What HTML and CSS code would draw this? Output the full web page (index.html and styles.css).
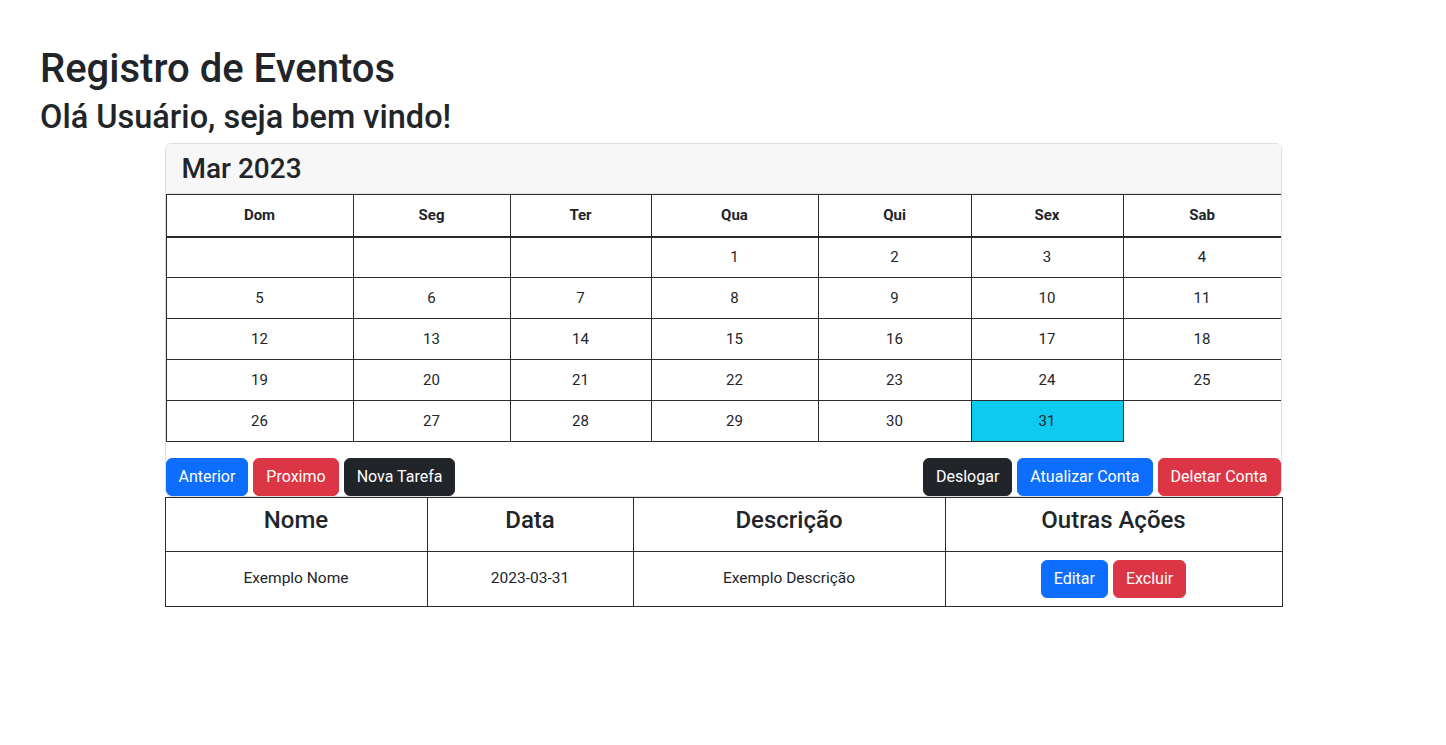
FILE: index.html
```html
<!DOCTYPE html>
<html lang="pt-BR">
<head>
<meta charset="utf-8">
<title>Registro de Eventos</title>
<link rel="stylesheet" href="styles.css">
</head>
<body>
<header class="intro">
  <h1 class="title">Registro de Eventos</h1>
  <h2 class="greeting">Olá Usuário, seja bem vindo!</h2>
</header>
<main class="board">
  <section class="card">
    <div class="card-header"><h3 class="month">Mar 2023</h3></div>
    <table class="calendar">
      <colgroup>
        <col class="c1"><col class="c2"><col class="c3"><col class="c4"><col class="c5"><col class="c6"><col class="c7">
      </colgroup>
      <thead>
        <tr><th>Dom</th><th>Seg</th><th>Ter</th><th>Qua</th><th>Qui</th><th>Sex</th><th>Sab</th></tr>
      </thead>
      <tbody>
        <tr><td></td><td></td><td></td><td>1</td><td>2</td><td>3</td><td>4</td></tr>
        <tr><td>5</td><td>6</td><td>7</td><td>8</td><td>9</td><td>10</td><td>11</td></tr>
        <tr><td>12</td><td>13</td><td>14</td><td>15</td><td>16</td><td>17</td><td>18</td></tr>
        <tr><td>19</td><td>20</td><td>21</td><td>22</td><td>23</td><td>24</td><td>25</td></tr>
        <tr><td>26</td><td>27</td><td>28</td><td>29</td><td>30</td><td class="today">31</td></tr>
      </tbody>
    </table>
    <div class="actions">
      <div class="group">
        <button class="btn btn-primary">Anterior</button>
        <button class="btn btn-danger">Proximo</button>
        <button class="btn btn-dark">Nova Tarefa</button>
      </div>
      <div class="group">
        <button class="btn btn-dark">Deslogar</button>
        <button class="btn btn-primary">Atualizar Conta</button>
        <button class="btn btn-danger">Deletar Conta</button>
      </div>
    </div>
  </section>
  <table class="events">
    <colgroup>
      <col class="e1"><col class="e2"><col class="e3"><col class="e4">
    </colgroup>
    <thead>
      <tr>
        <th><h4 class="col-title">Nome</h4></th>
        <th><h4 class="col-title">Data</h4></th>
        <th><h4 class="col-title">Descrição</h4></th>
        <th><h4 class="col-title">Outras Ações</h4></th>
      </tr>
    </thead>
    <tbody>
      <tr>
        <td>Exemplo Nome</td>
        <td>2023-03-31</td>
        <td>Exemplo Descrição</td>
        <td>
          <div class="row-actions">
            <button class="btn btn-primary">Editar</button>
            <button class="btn btn-danger">Excluir</button>
          </div>
        </td>
      </tr>
    </tbody>
  </table>
</main>
</body>
</html>
```
FILE: styles.css
```css
* { box-sizing: border-box; }

body {
  margin: 0;
  font-family: Roboto, "Liberation Sans", Arial, sans-serif;
  font-size: 16px;
  line-height: 1.5;
  color: #212529;
  background: #fff;
}

.intro {
  padding: 45px 40px 0;
}

.title {
  margin: 0 0 5px;
  font-size: 40px;
  font-weight: 500;
  line-height: 1.2;
}

.greeting {
  margin: 0 0 6px;
  font-size: 32.5px;
  font-weight: 500;
  line-height: 1.2;
}

.board {
  width: 1117px;
  margin: 0 auto;
}

.card {
  border: 1px solid rgba(0, 0, 0, 0.13);
  border-radius: 6px;
  overflow: hidden;
}

.card-header {
  background: #f7f7f7;
  padding: 8px 16px;
  border-bottom: 1px solid rgba(0, 0, 0, 0.08);
}

.month {
  margin: 0;
  font-size: 28px;
  font-weight: 500;
  line-height: 33px;
}

.calendar {
  width: 100%;
  border-collapse: collapse;
  table-layout: fixed;
  margin-bottom: 16px;
}

.c1 { width: 187px; }
.c2 { width: 157px; }
.c3 { width: 141px; }
.c4 { width: 167px; }
.c5 { width: 153px; }
.c6 { width: 152px; }
.c7 { width: 158px; }

.calendar th,
.calendar td {
  border: 1px solid #2b2b2b;
  padding: 8px;
  text-align: center;
  height: 41px;
}

.calendar th {
  font-weight: 700;
  font-size: 15px;
  border-bottom-width: 2px;
  height: 42px;
}

.calendar td {
  font-size: 15px;
}

.calendar td.today {
  background: #0dcaf0;
}

.actions {
  display: flex;
  justify-content: space-between;
}

.group {
  display: flex;
  gap: 5px;
}

.btn {
  font-family: inherit;
  font-size: 16px;
  line-height: 24px;
  padding: 6px 12px;
  border: 1px solid transparent;
  border-radius: 6px;
  color: #fff;
  cursor: pointer;
}

.btn-primary { background: #0d6efd; border-color: #0d6efd; }
.btn-danger { background: #dc3545; border-color: #dc3545; }
.btn-dark { background: #212529; border-color: #212529; }

.events {
  width: 100%;
  border-collapse: collapse;
  table-layout: fixed;
}

.e1 { width: 262px; }
.e2 { width: 206px; }
.e3 { width: 312px; }
.e4 { width: 337px; }

.events th,
.events td {
  border: 1px solid #2b2b2b;
  padding: 8px;
  text-align: center;
  vertical-align: middle;
}

.events td {
  font-size: 15.5px;
}

.col-title {
  margin: 0 0 8px;
  font-size: 24px;
  font-weight: 500;
  line-height: 1.2;
}

.row-actions {
  display: flex;
  justify-content: center;
  gap: 5px;
}
```
